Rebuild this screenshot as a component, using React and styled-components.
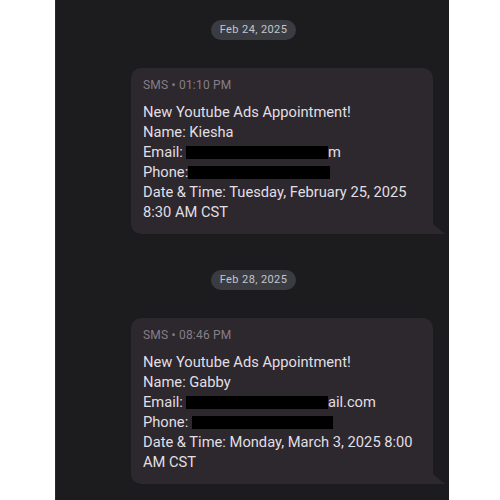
import React from 'react'
import styled, { createGlobalStyle } from 'styled-components'

const GlobalStyle = createGlobalStyle`
  html, body {
    margin: 0;
    padding: 0;
    background: #ffffff;
  }
  body {
    font-family: Roboto, "Liberation Sans", sans-serif;
  }
`

const Page = styled.div`
  display: flex;
  justify-content: flex-start;
  width: 500px;
  height: 500px;
  overflow: hidden;
`

const Thread = styled.div`
  margin-left: 55px;
  width: 394px;
  height: 500px;
  background: #1c1b1e;
  border-left: 1px solid #2a2a2c;
  box-sizing: border-box;
  display: flex;
  flex-direction: column;
  align-items: stretch;
  padding-top: 20px;
`

const DateRow = styled.div`
  display: flex;
  justify-content: center;
  padding-left: 2px;
  margin-top: ${(p) => p.$top || 0}px;
`

const DateChip = styled.div`
  height: 20px;
  line-height: 20px;
  padding: 0 9px;
  border-radius: 10px;
  background: #3b3c42;
  color: #c4c5ca;
  font-size: 11px;
  letter-spacing: 0.4px;
`

const BubbleRow = styled.div`
  display: flex;
  justify-content: flex-end;
  padding-right: 16px;
  margin-top: ${(p) => p.$top || 0}px;
`

const Bubble = styled.div`
  position: relative;
  width: 302px;
  box-sizing: border-box;
  padding: 9px 12px 12px;
  background: #2c282d;
  border-radius: 10px 10px 0 10px;

  &::after {
    content: '';
    position: absolute;
    right: -12px;
    bottom: 0;
    width: 0;
    height: 0;
    border-left: 12px solid #2c282d;
    border-top: 10px solid transparent;
  }
`

const Meta = styled.div`
  font-size: 12px;
  line-height: 16px;
  color: #857f88;
  letter-spacing: 0.2px;
`

const Body = styled.div`
  margin-top: 9px;
  color: #e2dfe4;
  font-size: 14.7px;
  line-height: 20px;
`

const Line = styled.div`
  white-space: nowrap;
  display: flex;
  align-items: center;
`

const Redact = styled.span`
  display: inline-block;
  width: ${(p) => p.$w}px;
  height: 13px;
  margin-left: ${(p) => p.$ml || 0}px;
  background: #000;
`

const Message = ({ time, name, emailGap, emailTail, phoneGap, phoneW, date1, date2 }) => (
  <Bubble>
    <Meta>SMS • {time}</Meta>
    <Body>
      <Line>New Youtube Ads Appointment!</Line>
      <Line>Name: {name}</Line>
      <Line>
        Email:<Redact $w={142} $ml={emailGap} />
        {emailTail}
      </Line>
      <Line>
        Phone:<Redact $w={phoneW} $ml={phoneGap} />
      </Line>
      <Line>{date1}</Line>
      <Line>{date2}</Line>
    </Body>
  </Bubble>
)

export default function App() {
  return (
    <Page>
      <GlobalStyle />
      <Thread>
        <DateRow>
          <DateChip>Feb 24, 2025</DateChip>
        </DateRow>
        <BubbleRow $top={28}>
          <Message
            time='01:10 PM'
            name='Kiesha'
            emailGap={3}
            emailTail='m'
            phoneGap={0}
            phoneW={142}
            date1='Date & Time: Tuesday, February 25, 2025'
            date2='8:30 AM CST'
          />
        </BubbleRow>
        <DateRow $top={36}>
          <DateChip>Feb 28, 2025</DateChip>
        </DateRow>
        <BubbleRow $top={28}>
          <Message
            time='08:46 PM'
            name='Gabby'
            emailGap={3}
            emailTail='ail.com'
            phoneGap={4}
            phoneW={141}
            date1='Date & Time: Monday, March 3, 2025 8:00'
            date2='AM CST'
          />
        </BubbleRow>
      </Thread>
    </Page>
  )
}
